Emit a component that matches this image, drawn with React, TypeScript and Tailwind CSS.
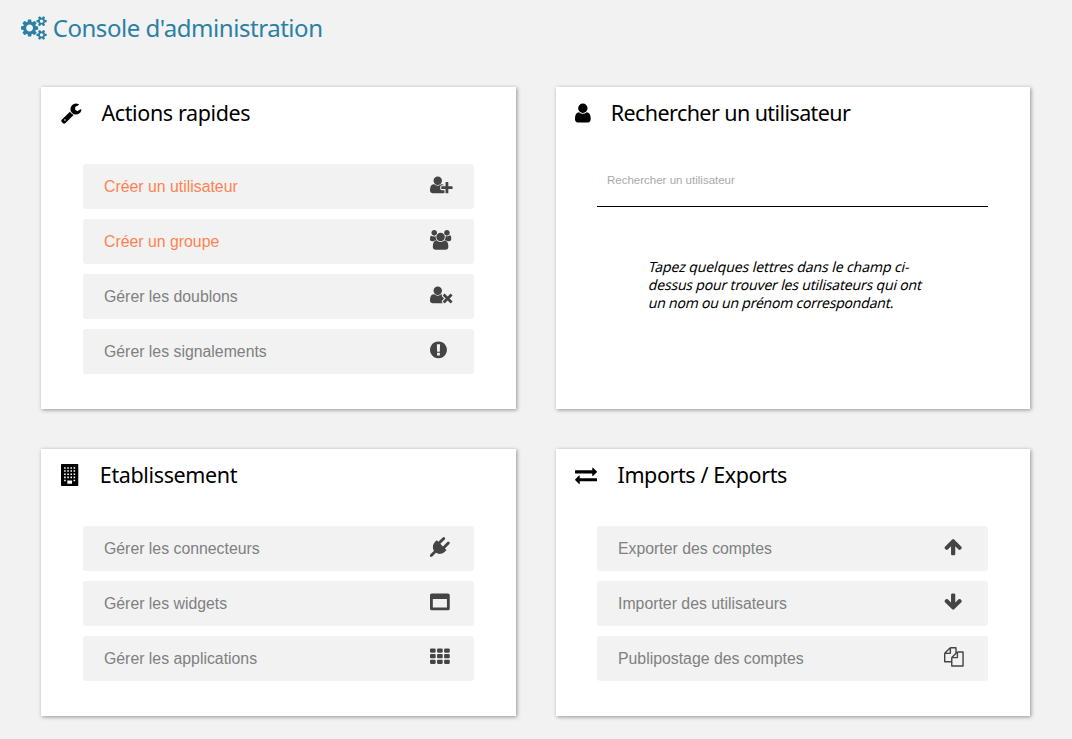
import type { ReactNode } from 'react';

type Glyph = { x?: number; w: number; d: string };

const userPath =
  'M1536 1399q0 109-62.5 187t-150.5 78h-854q-88 0-150.5-78t-62.5-187q0-85 8.5-160.5t31.5-152 58.5-131 94-89 134.5-34.5q131 128 313 128t313-128q76 0 134.5 34.5t94 89 58.5 131 31.5 152 8.5 160.5zm-256-887q0 159-112.5 271.5t-271.5 112.5-271.5-112.5-112.5-271.5 112.5-271.5 271.5-112.5 271.5 112.5 112.5 271.5z';

const smallCog =
  'v140q0 16-149 31-12 27-30 52 51 113 51 138 0 4-4 7-122 71-124 71-8 0-46-47t-52-68q-20 2-30 2t-30-2q-14 21-52 68t-46 47q-2 0-124-71-4-3-4-7 0-25 51-138-18-25-30-52-149-15-149-31v-140q0-16 149-31 13-29 30-52-51-113-51-138 0-4 4-7 4-2 35-20t59-34 30-16q8 0 46 46.5t52 67.5q20-2 30-2t30 2q51-71 92-112l6-2q4 0 124 70 4 3 4 7 0 25-51 138 17 23 30 52 149 15 149 31z';

const cell = (x: number, y: number) =>
  `M${x + 512} ${y + 96}v192q0 40-28 68t-68 28h-320q-40 0-68-28t-28-68v-192q0-40 28-68t68-28h320q40 0 68 28t28 68z`;

const pane = (x: number, y: number, w = 128, h = 128) => `M${x} ${y}v${h}h${w}v-${h}z`;

const glyphs = {
  cogs: {
    x: -64,
    w: 1920,
    d:
      'M832 896q0-106-75-181t-181-75-181 75-75 181 75 181 181 75 181-75 75-181zm768 512q0-52-38-90t-90-38-90 38-38 90q0 53 37.5 90.5t90.5 37.5 90.5-37.5 37.5-90.5zm0-1024q0-52-38-90t-90-38-90 38-38 90q0 53 37.5 90.5t90.5 37.5 90.5-37.5 37.5-90.5zm-384 421v185q0 10-7 19.5t-16 10.5l-155 24q-11 35-32 76 34 48 90 115 7 11 7 20 0 12-7 19-23 30-82.5 89.5t-78.5 59.5q-11 0-21-7l-115-90q-37 19-77 31-11 108-23 155-7 24-30 24h-186q-11 0-20-7.5t-10-17.5l-23-153q-34-10-75-31l-118 89q-7 7-20 7-11 0-21-8-144-133-144-160 0-9 7-19 10-14 41-53t47-61q-23-44-35-82l-152-24q-10-1-17-9.5t-7-19.5v-185q0-10 7-19.5t16-10.5l155-24q11-35 32-76-34-48-90-115-7-11-7-20 0-12 7-20 22-30 82-89t79-59q11 0 21 7l115 90q34-18 77-32 11-108 23-154 7-24 30-24h186q11 0 20 7.5t10 17.5l23 153q34 10 75 31l118-89q8-7 20-7 11 0 21 8 144 133 144 160 0 8-7 19-12 16-42 54t-45 60q23 48 34 82l152 23q10 2 17 10.5t7 19.5zM1856 1338' +
      smallCog +
      'M1856 314' +
      smallCog,
  },
  wrench: {
    x: 64,
    w: 1664,
    d: 'M448 1472q0-26-19-45t-45-19-45 19-19 45 19 45 45 19 45-19 19-45zm644-420l-682 682q-37 37-90 37-52 0-91-37l-106-108q-38-36-38-90 0-53 38-91l681-681q39 98 114.5 173.5t173.5 114.5zm634-435q0 39-23 106-47 134-164.5 217.5t-258.5 83.5q-185 0-316.5-131.5t-131.5-316.5 131.5-316.5 316.5-131.5q58 0 121.5 16.5t107.5 46.5q16 11 16 28t-16 28l-293 169v224l193 107q5-3 79-48.5t135.5-81 70.5-35.5q15 0 23.5 10t8.5 25z',
  },
  user: { x: 256, w: 1280, d: userPath },
  building: {
    w: 1408,
    d:
      'M1344 0q26 0 45 19t19 45v1664q0 26-19 45t-45 19h-1280q-26 0-45-19t-19-45v-1664q0-26 19-45t45-19z' +
      [256, 512, 768, 1024].map((y) => [256, 512, 768, 1024].map((x) => pane(x, y)).join('')).join('') +
      pane(256, 1280) +
      pane(1024, 1280) +
      pane(512, 1344, 384, 256),
  },
  exchange: {
    w: 1792,
    d: 'M1792 1184v192q0 13-9.5 22.5t-22.5 9.5h-1376v192q0 13-9.5 22.5t-22.5 9.5q-12 0-24-10l-319-320q-9-9-9-22 0-14 9-23l320-320q9-9 23-9 13 0 22.5 9.5t9.5 22.5v192h1376q13 0 22.5 9.5t9.5 22.5zm0-544q0 14-9 23l-320 320q-9 9-23 9-13 0-22.5-9.5t-9.5-22.5v-192h-1376q-13 0-22.5-9.5t-9.5-22.5v-192q0-13 9.5-22.5t22.5-9.5h1376v-192q0-14 9-23t23-9q12 0 24 10l319 319q9 9 9 23z',
  },
  userPlus: {
    w: 2048,
    d: 'M704 896q-159 0-271.5-112.5t-112.5-271.5 112.5-271.5 271.5-112.5 271.5 112.5 112.5 271.5-112.5 271.5-271.5 112.5zm960 128h352q13 0 22.5 9.5t9.5 22.5v192q0 13-9.5 22.5t-22.5 9.5h-352v352q0 13-9.5 22.5t-22.5 9.5h-192q-13 0-22.5-9.5t-9.5-22.5v-352h-352q-13 0-22.5-9.5t-9.5-22.5v-192q0-13 9.5-22.5t22.5-9.5h352v-352q0-13 9.5-22.5t22.5-9.5h192q13 0 22.5 9.5t9.5 22.5v352zm-736 224q0 52 38 90t90 38h256v238q-68 50-171 50h-874q-121 0-194-69t-73-190q0-53 3.5-103.5t14-109 26.5-108.5 43-97.5 62-81 85.5-53.5 111.5-20q19 0 39 17 79 61 154.5 91.5t164.5 30.5 164.5-30.5 154.5-91.5q20-17 39-17 132 0 217 96h-223q-52 0-90 38t-38 90v192z',
  },
  users: {
    w: 1920,
    d: 'M593 896q-162 5-265 128h-134q-82 0-138-40.5t-56-118.5q0-353 124-353 6 0 43.5 21t97.5 42.5 119 21.5q67 0 133-23-5 37-5 66 0 159 93 290zm1071 637q0 120-73 189.5t-194 69.5h-874q-121 0-194-69.5t-73-189.5q0-53 3.5-103.5t14-109 26.5-108.5 43-97.5 62-81 85.5-53.5 111.5-20q10 0 43 21.5t73 48 107 48 135 21.5 135-21.5 107-48 73-48 43-21.5q61 0 111.5 20t85.5 53.5 62 81 43 97.5 26.5 108.5 14 109 3.5 103.5zm-1024-1277q0 106-75 181t-181 75-181-75-75-181 75-181 181-75 181 75 75 181zm704 384q0 159-112.5 271.5t-271.5 112.5-271.5-112.5-112.5-271.5 112.5-271.5 271.5-112.5 271.5 112.5 112.5 271.5zm576 225q0 78-56 118.5t-138 40.5h-134q-103-123-265-128 93-131 93-290 0-29-5-66 66 23 133 23 59 0 119-21.5t97.5-42.5 43.5-21q124 0 124 353zm-128-609q0 106-75 181t-181 75-181-75-75-181 75-181 181-75 181 75 75 181z',
  },
  userTimes: {
    w: 2048,
    d: 'M704 896q-159 0-271.5-112.5t-112.5-271.5 112.5-271.5 271.5-112.5 271.5 112.5 112.5 271.5-112.5 271.5-271.5 112.5zm1077 320l249 249q9 9 9 23 0 13-9 22l-136 136q-9 9-22 9-14 0-23-9l-249-249-249 249q-9 9-23 9-13 0-22-9l-136-136q-9-9-9-22 0-14 9-23l249-249-249-249q-9-9-9-23 0-13 9-22l136-136q9-9 22-9 14 0 23 9l249 249 249-249q9-9 23-9 13 0 22 9l136 136q9 9 9 22 0 14-9 23zm-498 0l-181 181q-37 37-37 91 0 53 37 90l83 83q-21 3-44 3h-874q-121 0-194-69t-73-190q0-53 3.5-103.5t14-109 26.5-108.5 43-97.5 62-81 85.5-53.5 111.5-20q19 0 39 17 154 122 319 122t319-122q20-17 39-17 28 0 57 6-28 27-41 50t-13 56q0 54 37 91z',
  },
  alert: {
    x: 128,
    w: 1536,
    d: 'M896 128q209 0 385.5 103t279.5 279.5 103 385.5-103 385.5-279.5 279.5-385.5 103-385.5-103-279.5-279.5-103-385.5 103-385.5 279.5-279.5 385.5-103zm128 1247v-190q0-14-9-23.5t-22-9.5h-192q-13 0-23 10t-10 23v190q0 13 10 23t23 10h192q13 0 22-9.5t9-23.5zm-2-344l18-621q0-12-10-18-10-8-24-8h-220q-14 0-24 8-10 6-10 18l17 621q0 10 10 17.5t24 7.5h185q14 0 23.5-7.5t10.5-17.5z',
  },
  plug: {
    w: 1792,
    d: 'M1755 453q37 38 37 90.5t-37 90.5l-401 400 150 150-160 160q-163 163-389.5 186.5t-411.5-100.5l-362 362h-181v-181l362-362q-124-185-100.5-411.5t186.5-389.5l160-160 150 150 400-401q38-37 91-37t90 37 37 90.5-37 90.5l-400 401 234 234 401-400q38-37 91-37t90 37z',
  },
  window: {
    w: 1792,
    d: 'M256 1408h1280v-768h-1280v768zm1536-1120v1216q0 66-47 113t-113 47h-1472q-66 0-113-47t-47-113v-1216q0-66 47-113t113-47h1472q66 0 113 47t47 113z',
  },
  grid: {
    w: 1792,
    d: [128, 640, 1152].map((y) => [0, 640, 1280].map((x) => cell(x, y)).join('')).join(''),
  },
  up: {
    x: 64,
    w: 1664,
    d: 'M1675 971q0 51-37 90l-75 75q-38 38-91 38-54 0-90-38l-294-293v704q0 52-37.5 84.5t-90.5 32.5h-128q-53 0-90.5-32.5t-37.5-84.5v-704l-294 293q-36 38-90 38t-90-38l-75-75q-38-38-38-90 0-53 38-91l651-651q35-37 90-37 54 0 91 37l651 651q37 39 37 91z',
  },
  down: {
    x: 64,
    w: 1664,
    d: 'M1675 832q0 53-37 90l-651 652q-39 37-91 37-53 0-90-37l-651-652q-38-36-38-90 0-53 38-91l74-75q39-37 91-37 53 0 90 37l294 294v-704q0-52 38-90t90-38h128q52 0 90 38t38 90v704l294-294q37-37 90-37 52 0 91 37l75 75q37 39 37 91z',
  },
  files: {
    w: 1792,
    d: 'M1696 384q40 0 68 28t28 68v1216q0 40-28 68t-68 28h-960q-40 0-68-28t-28-68v-288h-544q-40 0-68-28t-28-68v-672q0-40 20-88t48-76l408-408q28-28 76-48t88-20h416q40 0 68 28t28 68v328q68-40 128-40h416zm-544 213l-299 299h299v-299zm-640-384l-299 299h299v-299zm196 647l316-316v-416h-384v416q0 40-28 68t-68 28h-416v640h512v-256q0-40 20-88t48-76zm956 804v-1152h-384v416q0 40-28 68t-68 28h-416v640h896z',
  },
} satisfies Record<string, Glyph>;

type GlyphName = keyof typeof glyphs;

function Icon({ name, className }: { name: GlyphName; className: string }) {
  const g: Glyph = glyphs[name];
  return (
    <svg
      viewBox={`${g.x ?? 0} 0 ${g.w} 1792`}
      fill="currentColor"
      fillRule="evenodd"
      aria-hidden="true"
      className={`w-auto shrink-0 overflow-visible ${className}`}
    >
      <path d={g.d} />
    </svg>
  );
}

function Card({
  icon,
  title,
  headClass,
  titleClass,
  children,
}: {
  icon: GlyphName;
  title: string;
  headClass: string;
  titleClass: string;
  children: ReactNode;
}) {
  return (
    <section className="bg-white shadow-[1px_1px_4px_rgba(0,0,0,0.4)]">
      <h2 className={`flex h-[54px] items-center gap-5 pb-0.5 text-black ${headClass}`}>
        <Icon name={icon} className="h-[22px]" />
        <span className={`font-['Noto_Sans',sans-serif] text-[21.5px] leading-7 whitespace-nowrap ${titleClass}`}>
          {title}
        </span>
      </h2>
      {children}
    </section>
  );
}

type Action = { label: string; icon: GlyphName; highlighted?: boolean };

function Actions({ items, className }: { items: Action[]; className: string }) {
  return (
    <ul className={`mt-[23px] flex flex-col gap-2.5 ${className}`}>
      {items.map((item) => (
        <li key={item.label}>
          <button
            className={`flex h-[45px] w-full items-center justify-between rounded-[3px] bg-[#f2f2f2] pl-[21px] text-left text-[15.83px] ${
              item.highlighted ? 'text-[#ff8352]' : 'text-[#808080]'
            }`}
          >
            {item.label}
            <span className="mb-1 w-[44.5px] text-[#444]">
              <Icon name={item.icon} className="h-[19.75px]" />
            </span>
          </button>
        </li>
      ))}
    </ul>
  );
}

export default function App() {
  return (
    <main className="h-[739px] overflow-hidden bg-[#f2f2f2] font-['Liberation_Sans',Arial,sans-serif]">
      <h1 className="flex h-[87px] items-start gap-1.5 pt-3 pl-[21px] text-[#2a80a5]">
        <Icon name="cogs" className="mt-1 h-6" />
        <span className="font-['Noto_Sans',sans-serif] text-[24px] leading-8 tracking-[-0.46px] whitespace-nowrap">
          Console d'administration
        </span>
      </h1>
      <div className="ml-[41px] grid w-[989px] grid-cols-[475px_474px] grid-rows-[322px_267px] gap-10">
        <Card icon="wrench" title="Actions rapides" headClass="pl-5" titleClass="tracking-[-0.38px]">
          <Actions
            className="mx-[42px]"
            items={[
              { label: 'Créer un utilisateur', icon: 'userPlus', highlighted: true },
              { label: 'Créer un groupe', icon: 'users', highlighted: true },
              { label: 'Gérer les doublons', icon: 'userTimes' },
              { label: 'Gérer les signalements', icon: 'alert' },
            ]}
          />
        </Card>
        <Card icon="user" title="Rechercher un utilisateur" headClass="pl-[19px]" titleClass="tracking-[-0.58px]">
          <div className="mt-[13px] mr-[42px] ml-[41px]">
            <input
              placeholder="Rechercher un utilisateur"
              className="block h-[53px] w-full border-b border-black bg-transparent px-2.5 text-[11.5px] outline-none placeholder:text-[#a9a9a9]"
            />
          </div>
          <p className="mt-[51px] ml-[92.5px] w-[290px] font-['Noto_Sans',sans-serif] text-[14px] leading-[18px] whitespace-nowrap text-black">
            <span className="block -skew-x-[14deg] tracking-[-0.1px]">Tapez quelques lettres dans le champ ci-</span>
            <span className="block -skew-x-[14deg] tracking-[-0.19px]">
              dessus pour trouver les utilisateurs qui ont
            </span>
            <span className="block -skew-x-[14deg] tracking-[-0.23px]">un nom ou un prénom correspondant.</span>
          </p>
        </Card>
        <Card icon="building" title="Etablissement" headClass="pl-5" titleClass="ml-[1.5px] tracking-[-0.36px]">
          <Actions
            className="mx-[42px]"
            items={[
              { label: 'Gérer les connecteurs', icon: 'plug' },
              { label: 'Gérer les widgets', icon: 'window' },
              { label: 'Gérer les applications', icon: 'grid' },
            ]}
          />
        </Card>
        <Card
          icon="exchange"
          title="Imports / Exports"
          headClass="pl-[19px]"
          titleClass="ml-[0.5px] tracking-[-0.4px]"
        >
          <Actions
            className="mr-[42px] ml-[41px]"
            items={[
              { label: 'Exporter des comptes', icon: 'up' },
              { label: 'Importer des utilisateurs', icon: 'down' },
              { label: 'Publipostage des comptes', icon: 'files' },
            ]}
          />
        </Card>
      </div>
    </main>
  );
}
